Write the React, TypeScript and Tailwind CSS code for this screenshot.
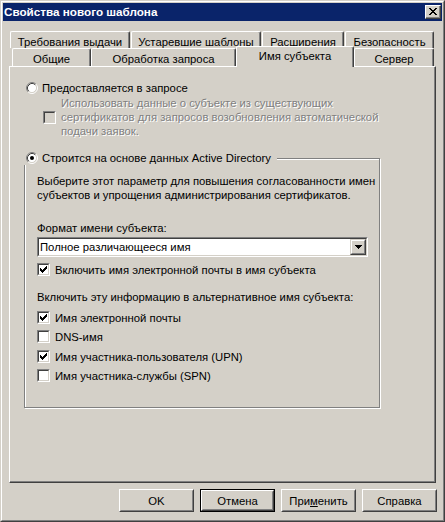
const font = "font-['Liberation_Sans',Arial,sans-serif]";

function Radio({ checked }: { checked?: boolean }) {
  return (
    <svg width="12" height="12" viewBox="0 0 12 12" className="shrink-0">
      <circle cx="6" cy="6" r="4.5" fill="#fff" />
      <path d="M2.11 9.89 A5.5 5.5 0 0 1 9.89 2.11" stroke="#808080" fill="none" />
      <path d="M9.89 2.11 A5.5 5.5 0 0 1 2.11 9.89" stroke="#fff" fill="none" />
      <path d="M2.82 9.18 A4.5 4.5 0 0 1 9.18 2.82" stroke="#404040" fill="none" />
      <path d="M9.18 2.82 A4.5 4.5 0 0 1 2.82 9.18" stroke="#d4d0c8" fill="none" />
      {checked && <circle cx="6" cy="6" r="2" fill="#000" />}
    </svg>
  );
}

function Check({ checked, disabled }: { checked?: boolean; disabled?: boolean }) {
  return (
    <span className="w-[13px] h-[13px] shrink-0 flex border border-t-[#808080] border-l-[#808080] border-b-white border-r-white">
      <span
        className={
          "flex-1 flex items-center justify-center border border-t-[#404040] border-l-[#404040] border-b-[#d4d0c8] border-r-[#d4d0c8] " +
          (disabled ? "bg-[#d4d0c8]" : "bg-white")
        }
      >
        {checked && (
          <svg width="7" height="7" viewBox="0 0 7 7" shapeRendering="crispEdges">
            <path
              d="M0 2h1v1h1v1h1v-1h1v-1h1v-1h1v-1h1v3h-1v1h-1v1h-1v1h-1v1h-1v-1h-1v-1h-1z"
              fill="#000"
            />
          </svg>
        )}
      </span>
    </span>
  );
}

function Tab({ label, w, selected }: { label: string; w: string; selected?: boolean }) {
  return (
    <div
      className={
        "flex justify-center border-l border-t border-white border-r border-r-[#404040] rounded-t-[2px] shadow-[inset_-1px_0_0_#808080] bg-[#d4d0c8] " +
        w +
        (selected ? " relative z-10 h-[21px] -mb-px pt-[2px]" : " h-full pt-[3px]")
      }
    >
      {label}
    </div>
  );
}

function Btn({ children, def }: { children: React.ReactNode; def?: boolean }) {
  return (
    <div className={"w-[75px] h-[23px] flex " + (def ? "border border-black" : "")}>
      <div className="flex-1 flex border border-t-white border-l-white border-b-[#404040] border-r-[#404040]">
        <div className="flex-1 flex items-center justify-center border border-t-[#d4d0c8] border-l-[#d4d0c8] border-b-[#808080] border-r-[#808080]">
          {children}
        </div>
      </div>
    </div>
  );
}

function CheckRow({ label, checked, className }: { label: string; checked?: boolean; className?: string }) {
  return (
    <div className={"flex items-center h-[13px] gap-[5px] " + (className ?? "")}>
      <Check checked={checked} />
      <span>{label}</span>
    </div>
  );
}

export default function App() {
  return (
    <div
      className={
        "w-[445px] h-[522px] bg-[#d4d0c8] text-[11.3px] leading-[14px] text-black flex border border-t-[#d4d0c8] border-l-[#d4d0c8] border-b-[#404040] border-r-[#404040] " +
        font
      }
    >
      <div className="flex-1 flex flex-col p-px border border-t-white border-l-white border-b-[#808080] border-r-[#808080]">
        {/* title bar */}
        <div className="h-[18px] bg-[#0a246a] flex items-center justify-between pl-[1px] pr-[1px]">
          <span className="text-white font-bold text-[11.7px]">Свойства нового шаблона</span>
          <div className="w-[16px] h-[14px] flex border border-t-white border-l-white border-b-[#404040] border-r-[#404040] bg-[#d4d0c8]">
            <div className="flex-1 flex items-center justify-center border-r border-b border-[#808080]">
              <svg width="8" height="7" viewBox="0 0 8 7" shapeRendering="crispEdges">
                <path
                  d="M0 0h2v1h1v1h2v-1h1v-1h2v1h-1v1h-1v1h-1v1h1v1h1v1h1v1h-2v-1h-1v-1h-2v1h-1v1h-2v-1h1v-1h1v-1h1v-1h-1v-1h-1v-1h-1z"
                  fill="#000"
                />
              </svg>
            </div>
          </div>
        </div>

        {/* tabs */}
        <div className="mt-[10px] ml-[7px] flex gap-px h-[17px]">
          <Tab label="Требования выдачи" w="w-[120px]" />
          <Tab label="Устаревшие шаблоны" w="w-[130px]" />
          <Tab label="Расширения" w="w-[82px]" />
          <Tab label="Безопасность" w="w-[89px]" />
        </div>
        <div className="ml-[9px] flex items-end h-[18px]">
          <Tab label="Общие" w="w-[79px]" />
          <Tab label="Обработка запроса" w="w-[145px]" />
          <Tab label="Имя субъекта" w="w-[118px]" selected />
          <Tab label="Сервер" w="w-[80px]" />
        </div>

        {/* panel */}
        <div className="ml-[6px] w-[427px] h-[417px] flex flex-col border-l border-t border-white border-r border-b border-r-[#404040] border-b-[#404040] shadow-[inset_-1px_-1px_0_#808080] pt-[14px] pl-[16px]">
          <div className="flex items-center h-[14px] gap-[4px]">
            <Radio />
            <span>Предоставляется в запросе</span>
          </div>
          <div className="mt-px ml-[17px] flex items-center gap-[5px]">
            <Check disabled />
            <span className="text-[#808080] [text-shadow:1px_1px_0_#fff]">
              Использовать данные о субъекте из существующих
              <br />
              сертификатов для запросов возобновления автоматической
              <br />
              подачи заявок.
            </span>
          </div>

          {/* group box */}
          <div className="mt-[20px] -ml-[2px] w-[356px] border border-[#808080] shadow-[inset_1px_1px_0_#fff,1px_1px_0_#fff] flex flex-col pb-[25px]">
            <div className="-mt-[8px] -ml-px flex items-center h-[14px] gap-[4px] bg-[#d4d0c8] w-fit pl-[2px] pr-[6px]">
              <Radio checked />
              <span>Строится на основе данных Active Directory</span>
            </div>
            <div className="pl-[12px] flex flex-col">
              <p className="mt-[9px]">
                Выберите этот параметр для повышения согласованности имен
                <br />
                субъектов и упрощения администрирования сертификатов.
              </p>
              <p className="mt-[19px]">Формат имени субъекта:</p>
              <div className="mt-[2px] w-[331px] h-[20px] flex border border-t-[#808080] border-l-[#808080] border-b-white border-r-white">
                <div className="flex-1 flex items-center bg-white border border-t-[#404040] border-l-[#404040] border-b-[#d4d0c8] border-r-[#d4d0c8] pl-[1px]">
                  <span className="flex-1">Полное различающееся имя</span>
                  <div className="w-[16px] h-[16px] flex border border-t-[#d4d0c8] border-l-[#d4d0c8] border-b-[#404040] border-r-[#404040] bg-[#d4d0c8]">
                    <div className="flex-1 flex items-center justify-center border border-t-white border-l-white border-b-[#808080] border-r-[#808080]">
                      <svg width="7" height="4" viewBox="0 0 7 4" shapeRendering="crispEdges">
                        <path d="M0 0h7v1h-1v1h-1v1h-1v1h-1v-1h-1v-1h-1v-1h-1z" fill="#000" />
                      </svg>
                    </div>
                  </div>
                </div>
              </div>
              <CheckRow className="mt-[6px]" checked label="Включить имя электронной почты в имя субъекта" />
              <p className="mt-[14px]">Включить эту информацию в альтернативное имя субъекта:</p>
              <CheckRow className="mt-[7px]" checked label="Имя электронной почты" />
              <CheckRow className="mt-[6px]" label="DNS-имя" />
              <CheckRow className="mt-[7px]" checked label="Имя участника-пользователя (UPN)" />
              <CheckRow className="mt-[6px]" label="Имя участника-службы (SPN)" />
            </div>
          </div>
        </div>

        {/* buttons */}
        <div className="mt-[6px] flex justify-end gap-[6px] pr-[5px]">
          <Btn>OK</Btn>
          <Btn def>Отмена</Btn>
          <Btn>
            <span>
              При<span className="underline">м</span>енить
            </span>
          </Btn>
          <Btn>Справка</Btn>
        </div>
      </div>
    </div>
  );
}
